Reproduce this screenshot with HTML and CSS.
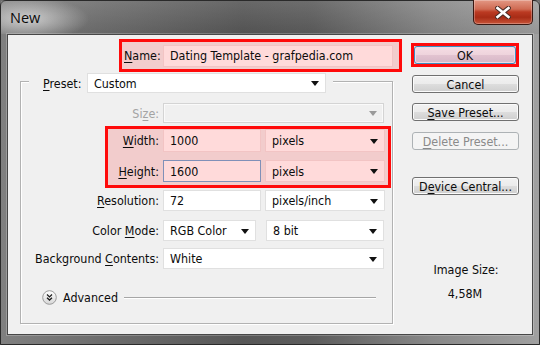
FILE: index.html
```html
<!DOCTYPE html>
<html>
<head>
<meta charset="utf-8">
<title>New</title>
<link rel="stylesheet" href="styles.css">
</head>
<body>
<div class="window">
  <div class="titlebar">
    <span class="title">New</span>
    <div class="close">
      <svg width="16" height="13" viewBox="0 0 16 13">
        <path d="M2.5 2 L13.5 11 M13.5 2 L2.5 11" stroke="#4b2b25" stroke-width="4.6" stroke-linecap="square"/>
        <path d="M2.5 2 L13.5 11 M13.5 2 L2.5 11" stroke="#ffffff" stroke-width="2.6" stroke-linecap="square"/>
      </svg>
    </div>
  </div>
  <div class="client">
    <div class="leftcol">
      <div class="namebox mark">
        <span class="name-lbl"><u>N</u>ame:</span>
        <div class="field name">Dating Template - grafpedia.com</div>
      </div>
      <div class="group">
        <div class="group-head">
          <span class="head-lbl"><u>P</u>reset:</span>
          <div class="select preset">Custom<span class="arrow"></span></div>
        </div>
        <div class="row r-size">
          <span class="lbl disabled">Si<u>z</u>e:</span>
          <div class="select wide off"><span class="arrow grey"></span></div>
        </div>
        <div class="mark dims">
          <div class="row r-width">
            <span class="lbl short"><u>W</u>idth:</span>
            <div class="field num">1000</div>
            <div class="select unit">pixels<span class="arrow"></span></div>
          </div>
          <div class="row r-height">
            <span class="lbl short"><u>H</u>eight:</span>
            <div class="field num focus">1600</div>
            <div class="select unit">pixels<span class="arrow"></span></div>
          </div>
        </div>
        <div class="row r-res">
          <span class="lbl"><u>R</u>esolution:</span>
          <div class="field num">72</div>
          <div class="select unit">pixels/inch<span class="arrow"></span></div>
        </div>
        <div class="row r-mode">
          <span class="lbl">Color <u>M</u>ode:</span>
          <div class="select mode">RGB Color<span class="arrow"></span></div>
          <div class="select unit bits">8 bit<span class="arrow"></span></div>
        </div>
        <div class="row r-bg">
          <span class="lbl">Background <u>C</u>ontents:</span>
          <div class="select wide">White<span class="arrow"></span></div>
        </div>
        <div class="advanced">
          <svg class="adv-icon" width="15" height="15" viewBox="0 0 15 15">
            <defs>
              <linearGradient id="ag" x1="0" y1="0" x2="0" y2="1">
                <stop offset="0" stop-color="#ffffff"/>
                <stop offset="1" stop-color="#d6d6d6"/>
              </linearGradient>
            </defs>
            <circle cx="7.5" cy="7.5" r="6.8" fill="url(#ag)" stroke="#9a9a9a" stroke-width="1"/>
            <path d="M5 4.6 L7.5 6.9 L10 4.6 M5 7.8 L7.5 10.1 L10 7.8" fill="none" stroke="#1e1e1e" stroke-width="1.3"/>
          </svg>
          <span class="adv-text">Advanced</span>
          <span class="adv-line"></span>
        </div>
      </div>
    </div>
    <div class="rightcol">
      <div class="mark okmark">
        <div class="btn ok">OK</div>
      </div>
      <div class="btn cancel">Cancel</div>
      <div class="btn save"><u>S</u>ave Preset...</div>
      <div class="btn del disabled-btn"><u>D</u>elete Preset...</div>
      <div class="btn device">D<u>e</u>vice Central...</div>
      <div class="imgsize">Image Size:</div>
      <div class="imgval">4,58M</div>
    </div>
  </div>
</div>
</body>
</html>
```
FILE: styles.css
```css
* { box-sizing: border-box; }
html, body { margin: 0; padding: 0; }
body {
  width: 540px;
  height: 345px;
  overflow: hidden;
  background: #6e6e6e;
  font-family: "DejaVu Sans Condensed", "DejaVu Sans", sans-serif;
  font-stretch: condensed;
  font-size: 12.4px;
  color: #0c0c0c;
}
u { text-decoration: underline; text-underline-offset: 2px; }

.window {
  width: 540px;
  height: 345px;
  border: 1px solid #2a2a2a;
  border-radius: 6px 6px 0 0;
  padding: 0 6px 9px 6px;
  display: flex;
  flex-direction: column;
  background: linear-gradient(90deg, #808080 0%, #6c6c6c 20%, #575757 45%, #5d5d5d 58%, #888888 80%, #a0a0a0 100%);
}

.titlebar {
  flex: none;
  height: 33px;
  margin: 0 -6px;
  padding: 0 6px 0 9px;
  display: flex;
  justify-content: space-between;
  align-items: flex-start;
  background:
    radial-gradient(ellipse 62px 22px at 26px 18px, rgba(255,255,255,0.62), rgba(255,255,255,0)),
    linear-gradient(180deg, rgba(255,255,255,0.10), rgba(0,0,0,0.06));
}
.title {
  margin-top: 7px;
  font-family: "Open Sans", "Noto Sans", sans-serif;
  font-stretch: normal;
  font-size: 14.5px;
  line-height: 20px;
  color: #0a0a0a;
}
.close {
  width: 60px;
  height: 25px;
  margin-top: -1px;
  border: 1px solid #3a1812;
  border-top: none;
  border-radius: 0 0 5px 5px;
  background: linear-gradient(180deg, #e39884 0%, #cf6a52 38%, #bb3a22 50%, #a82c16 72%, #c85438 100%);
  box-shadow: inset 0 0 0 1px rgba(255,255,255,0.28);
  display: flex;
  align-items: center;
  justify-content: center;
}

.client {
  flex: 1;
  background: #f0f0f0;
  border: 1px solid #474747;
  box-shadow: 0 0 0 1px rgba(255,255,255,0.22);
  display: flex;
  padding: 0 12px;
}

.leftcol { width: 373px; flex: none; padding-top: 4px; }
.rightcol { width: 108px; flex: none; margin-left: 18px; padding-top: 8px; }

.mark {
  border: 3px solid #ff0a0a;
  background: rgba(255, 0, 0, 0.15);
}
.mark .field, .mark .select { background: #ffdada; border-color: #f2c4c4; }

.namebox {
  width: 283px;
  height: 33px;
  margin-left: 99px;
  display: flex;
  align-items: center;
  padding: 0 6px 0 2px;
}
.name-lbl { flex: 1; }
.field.name { width: 230px; }

.field, .select {
  height: 22px;
  background: #ffffff;
  border: 1px solid #e0e0e0;
  display: flex;
  align-items: center;
  padding: 0 6px;
  white-space: nowrap;
  flex: none;
}
.select { justify-content: space-between; padding-right: 6px; }
.arrow {
  width: 0;
  height: 0;
  border-left: 4px solid transparent;
  border-right: 4px solid transparent;
  border-top: 5px solid #111;
  margin-top: 1px;
}
.arrow.grey { border-top-color: #9a9a9a; }
.field.focus { border-color: #8090b8; }

.group {
  margin-top: 9px;
  height: 243px;
  border: 1px solid #b2b2b2;
  box-shadow: inset 1px 1px 0 #ffffff, 1px 1px 0 #ffffff;
}
.group-head {
  margin: -9px 0 0 8px;
  width: max-content;
  height: 20px;
  display: flex;
  align-items: center;
  padding: 0 7px 0 14px;
  background: #f0f0f0;
}
.head-lbl { width: 44px; }
.select.preset { width: 239px; height: 20px; }

.row { display: flex; align-items: center; }
.lbl { width: 142px; flex: none; text-align: right; padding-right: 4px; }
.lbl.short { width: 55px; }
.lbl.disabled { color: #a3a3a3; }

.r-size { margin-top: 10px; }
.r-size .select { height: 20px; }
.select.off { background: #f0f0f0; border-color: #d4d4d4; box-shadow: inset 0 0 0 1px #fafafa; justify-content: flex-end; }
.select.wide { width: 221px; }

.dims {
  width: max-content;
  margin: 3px 0 0 84px;
  padding: 0 3px 3px 0;
}
.field.num { width: 98px; }
.select.unit { width: 120px; margin-left: 4px; }
.r-width .field, .r-width .select { height: 23px; }
.r-height { margin-top: 8px; }

.r-res { margin-top: 2px; }
.r-res .field, .r-res .select { height: 21px; }
.r-mode { margin-top: 9px; }
.r-mode .select { height: 21px; }
.select.mode { width: 93px; }
.select.bits { margin-left: 10px; width: 118px; }
.r-bg { margin-top: 7px; }
.r-bg .select { height: 21px; }

.advanced {
  margin-top: 21px;
  padding-left: 21px;
  padding-right: 16px;
  display: flex;
  align-items: center;
  height: 15px;
}
.adv-icon { flex: none; }
.adv-text { margin-left: 6px; }
.adv-line {
  flex: 1;
  margin-left: 6px;
  height: 2px;
  border-top: 1px solid #a6a6a6;
  border-bottom: 1px solid #ffffff;
}

.btn {
  height: 18px;
  width: 107px;
  margin-left: 1px;
  border: 1px solid #707070;
  border-radius: 3px;
  background: linear-gradient(180deg, #f2f2f2 0%, #ebebeb 50%, #dddddd 51%, #cfcfcf 100%);
  box-shadow: inset 0 0 0 1px #fbfbfb;
  display: flex;
  align-items: center;
  justify-content: center;
  white-space: nowrap;
}
.okmark { height: 24px; }
.btn.ok {
  width: auto;
  height: 18px;
  margin: 0;
  border-color: #3c8ec0;
  background: linear-gradient(180deg, #f5dde4 0%, #eed3dc 50%, #e2c3d0 51%, #d6b7c7 100%);
  box-shadow: inset 0 0 0 1px #f0dbe6;
}
.cancel { margin-top: 8px; }
.save { margin-top: 10px; }
.del { margin-top: 11px; }
.disabled-btn { color: #8a8a8a; border-color: #adb2b5; background: #f4f4f4; box-shadow: none; }
.device { margin-top: 27px; }

.imgsize { margin-top: 68px; line-height: 14px; text-align: center; padding-left: 2px; }
.imgval { margin-top: 10px; line-height: 14px; text-align: center; }
```
